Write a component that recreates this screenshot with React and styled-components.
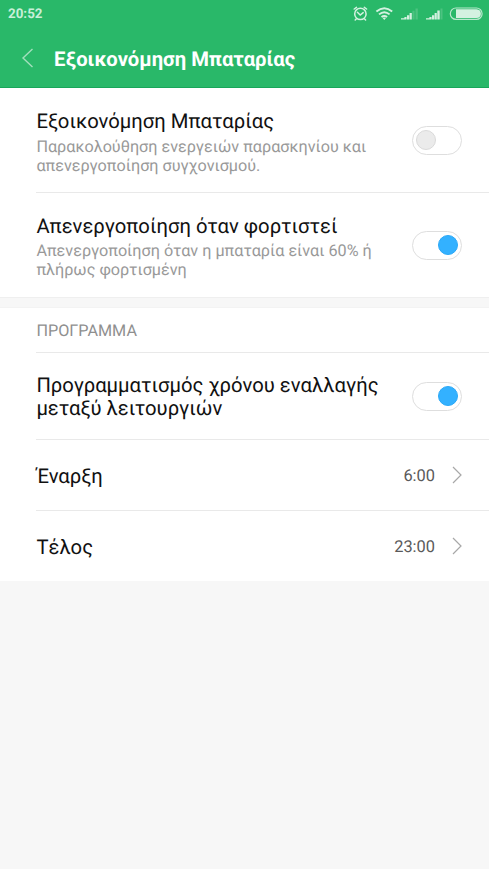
import React from "react";
import styled, { createGlobalStyle } from "styled-components";

const GlobalStyle = createGlobalStyle`
  *, *::before, *::after { box-sizing: border-box; }
  body { margin: 0; background: #f7f7f7; font-family: Roboto, "Noto Sans", sans-serif; text-rendering: geometricPrecision; }
`;

const Screen = styled.div`
  min-height: 869px;
  background: #f7f7f7;
`;

const Header = styled.header`
  height: 88px;
  background: #29b869;
  border-bottom: 1px solid #18a65a;
`;

const StatusBar = styled.div`
  display: flex;
  align-items: center;
  justify-content: space-between;
  height: 28px;
  padding-left: 8px;
`;

const Clock = styled.span`
  padding-top: 2px;
  color: #c8efd8;
  font-size: 13.4px;
  font-weight: 700;
  line-height: 28px;
`;

const TitleBar = styled.div`
  display: flex;
  align-items: center;
  height: 60px;
  padding-left: 21px;
`;

const PageTitle = styled.h1`
  margin: 0 0 0 20px;
  padding-top: 2px;
  color: #fff;
  font-size: 20.25px;
  font-weight: 700;
  line-height: 24px;
  white-space: nowrap;
`;

const Panel = styled.section`
  background: #fff;
`;

const Gap = styled.div`
  height: 11px;
  background: #f7f7f7;
  border-top: 1px solid #efefef;
  border-bottom: 1px solid #f3f3f3;
`;

const Row = styled.div`
  display: flex;
  align-items: center;
  justify-content: space-between;
  height: ${(p) => p.$height}px;
  margin-left: 36px;
  padding-right: 27px;
  border-bottom: ${(p) => (p.$last ? "none" : "1px solid #e9e9e9")};
`;

const TextBlock = styled.div`
  padding: ${(p) => p.$top || 2}px 0 0 0.4px;
`;

const Label = styled.div`
  color: #111;
  font-size: 20.25px;
  line-height: ${(p) => p.$leading || 24}px;
  white-space: nowrap;
`;

const Hint = styled.div`
  margin-top: ${(p) => p.$space || 3}px;
  color: #999;
  font-size: 16.2px;
  line-height: 19px;
  white-space: nowrap;
`;

const Caption = styled.h2`
  margin: 0;
  padding-left: 0.4px;
  color: #8f8f8f;
  font-size: 16.2px;
  font-weight: 400;
`;

const Value = styled.span`
  display: flex;
  align-items: center;
  gap: 17px;
  color: #5a5a5a;
  font-size: 16.4px;
`;

const Time = styled.span`
  padding-top: 2px;
`;

const Track = styled.button`
  display: flex;
  align-items: center;
  justify-content: ${(p) => (p.$on ? "flex-end" : "flex-start")};
  width: 50px;
  height: 29px;
  padding: 0 3px;
  border: 1px solid #dedede;
  border-radius: 15px;
  background: #fff;
`;

const Knob = styled.span`
  width: 20px;
  height: 20px;
  border: 1px solid ${(p) => (p.$on ? "#2ba9f7" : "#dadada")};
  border-radius: 50%;
  background: ${(p) => (p.$on ? "#33b1ff" : "#ebebeb")};
`;

const Switch = ({ on = false }) => (
  <Track $on={on} role="switch" aria-checked={on}>
    <Knob $on={on} />
  </Track>
);

const Chevron = () => (
  <svg width="10" height="18" viewBox="0 0 10 18" fill="none" stroke="#a8a8a8" strokeWidth="1.2">
    <path d="M1 1L9 9L1 17" />
  </svg>
);

const BackIcon = () => (
  <svg width="13" height="20" viewBox="0 0 13 20" fill="none" stroke="#a3dfbd" strokeWidth="1.4">
    <path d="M11.5 1L2 10L11.5 19" />
  </svg>
);

const StatusIcons = () => (
  <svg width="149" height="28" viewBox="0 0 149 28" fill="none">
    <g stroke="#d4f1e0" strokeWidth="1.5" strokeLinecap="round">
      <circle cx="20.4" cy="13.9" r="5.7" />
      <path d="M17.4 12.3L20.2 15L23.2 12.6M14.2 9L16.5 7.4M24.3 7.4L26.6 9M16.2 19L15.2 20M24.6 19L25.6 20" />
    </g>
    <g stroke="#d4f1e0" strokeWidth="1.9">
      <path d="M36.4 11.5Q44.3 4.8 52.2 11.5" />
      <path d="M39 14.4Q44.3 9.9 49.6 14.4" />
      <path d="M41.5 17.1Q44.3 14.8 47.1 17.1" />
    </g>
    <path d="M42.6 18L44.3 20L46 18Q44.3 16.8 42.6 18Z" fill="#d4f1e0" />
    <g fill="#d4f1e0">
      <path d="M61 18.2h3.4v1.4h-3.4zM64.4 17h2.2v2.6h-2.2zM67 15.2h2.2v4.4h-2.2zM69.6 12.9h2.2v6.7h-2.2z" />
      <path d="M86 18.2h3.4v1.4h-3.4zM89.4 17h2.2v2.6h-2.2zM92 15.2h2.2v4.4h-2.2zM94.6 12.9h2.2v6.7h-2.2zM97.3 10.5h2.4v9.1h-2.4z" />
    </g>
    <path d="M72.4 10.8h2.2v8.8h-2.2zM75.5 8.4h2.3v11.2h-2.3zM100.5 8.4h2v11.2h-2z" fill="#4cc280" />
    <rect x="110.3" y="8" width="31.8" height="11.4" rx="5.7" stroke="#b9e8cd" strokeWidth="1.2" />
    <path d="M116 9.3H136.5Q140.9 9.8 140.9 13.7Q140.9 17.6 136.5 18.1H116Z" fill="#d4f1e0" />
  </svg>
);

export default function App() {
  return (
    <Screen>
      <GlobalStyle />
      <Header>
        <StatusBar>
          <Clock>20:52</Clock>
          <StatusIcons />
        </StatusBar>
        <TitleBar>
          <BackIcon />
          <PageTitle>Εξοικονόμηση Μπαταρίας</PageTitle>
        </TitleBar>
      </Header>
      <Panel>
        <Row $height={105}>
          <TextBlock $top={4}>
            <Label>Εξοικονόμηση Μπαταρίας</Label>
            <Hint $space={4}>Παρακολούθηση ενεργειών παρασκηνίου και<br />απενεργοποίηση συγχονισμού.</Hint>
          </TextBlock>
          <Switch />
        </Row>
        <Row $height={104} $last>
          <TextBlock>
            <Label>Απενεργοποίηση όταν φορτιστεί</Label>
            <Hint>Απενεργοποίηση όταν η μπαταρία είναι 60% ή<br />πλήρως φορτισμένη</Hint>
          </TextBlock>
          <Switch on />
        </Row>
      </Panel>
      <Gap />
      <Panel>
        <Row $height={45}>
          <Caption>ΠΡΟΓΡΑΜΜΑ</Caption>
        </Row>
        <Row $height={87}>
          <TextBlock>
            <Label $leading={23}>Προγραμματισμός χρόνου εναλλαγής<br />μεταξύ λειτουργιών</Label>
          </TextBlock>
          <Switch on />
        </Row>
        <Row $height={71}>
          <TextBlock>
            <Label>Έναρξη</Label>
          </TextBlock>
          <Value><Time>6:00</Time><Chevron /></Value>
        </Row>
        <Row $height={70} $last>
          <TextBlock>
            <Label>Τέλος</Label>
          </TextBlock>
          <Value><Time>23:00</Time><Chevron /></Value>
        </Row>
      </Panel>
    </Screen>
  );
}
